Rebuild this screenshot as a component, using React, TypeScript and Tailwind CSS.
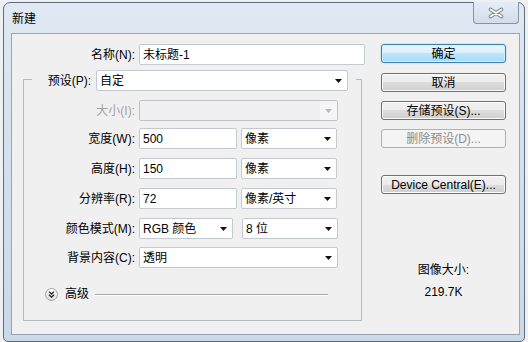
import React from "react";

const FONT = "font-['Liberation_Sans','Noto_Sans_CJK_SC',sans-serif]";

function Arrow({ disabled }: { disabled?: boolean }) {
  return (
    <svg width="7" height="4" viewBox="0 0 7 4">
      <polygon points="0,0 7,0 3.5,4" fill={disabled ? "#b8b8b8" : "#111"} />
    </svg>
  );
}

function Field({ value, className }: { value: string; className: string }) {
  return (
    <div className={`flex h-[21px] items-center rounded-[2px] border border-[#c3c9d0] bg-white pl-[3px] ${className}`}>
      {value}
    </div>
  );
}

function Select({ value, className }: { value: string; className: string }) {
  return (
    <div className={`flex h-[21px] items-center justify-between rounded-[2px] border border-[#c3c9d0] bg-white pl-[3px] pr-[5px] ${className}`}>
      <span>{value}</span>
      <Arrow />
    </div>
  );
}

function Button({ children, kind }: { children: React.ReactNode; kind?: "default" | "disabled" }) {
  if (kind === "default") {
    return (
      <div className="flex h-[19px] w-[125px] items-center justify-center rounded-[3px] border border-[#3c7fb1] bg-[linear-gradient(180deg,#eaf6fd_0%,#d7effc_50%,#bce5fc_50%,#a6d9f4_100%)] shadow-[0_0_2px_#8fd2f5,inset_0_0_0_1px_#d8f0fc]">
        {children}
      </div>
    );
  }
  if (kind === "disabled") {
    return (
      <div className="flex h-[19px] w-[125px] items-center justify-center rounded-[3px] border border-[#adb2b5] bg-[#f4f4f4] text-[#8d8d8d]">
        {children}
      </div>
    );
  }
  return (
    <div className="flex h-[19px] w-[125px] items-center justify-center rounded-[3px] border border-[#707070] bg-[linear-gradient(180deg,#f2f2f2_0%,#ebebeb_50%,#dddddd_50%,#cfcfcf_100%)] shadow-[inset_0_0_0_1px_#fbfbfb]">
      {children}
    </div>
  );
}

function Row({ label, children, className }: { label: string; children: React.ReactNode; className: string }) {
  return (
    <div className={`flex items-center ${className}`}>
      <span className="w-[111px] text-right">{label}</span>
      <div className="ml-[4px] flex gap-[4px]">{children}</div>
    </div>
  );
}

export default function App() {
  return (
    <div className={`flex h-[342px] w-[528px] bg-[#eef1f4] px-[3px] pt-[2px] text-[12px] leading-[14px] text-black ${FONT}`}>
      <div className="flex flex-1 flex-col rounded-t-[7px] rounded-b-[5px] border border-[#5f6c7b] bg-[linear-gradient(180deg,#e0e9f3_0%,#d4e0ed_45%,#cbd8e7_100%)]">
        {/* Title bar */}
        <div className="flex h-[30px] items-start justify-between">
          <span className="ml-[8px] mt-[9px]">新建</span>
          <div className="mr-[5px] mt-[-1px] flex h-[22px] w-[46px] items-center justify-center rounded-b-[4px] border border-t-0 border-[#8793a2] bg-[linear-gradient(180deg,#e4ecf5,#d3deea)]">
            <svg width="16" height="12" viewBox="0 0 16 12">
              <path d="M2.5 2.5 L13.5 9.5 M2.5 9.5 L13.5 2.5" stroke="#6f7b8a" strokeWidth="3.6" strokeLinecap="round" />
              <path d="M2.5 2.5 L13.5 9.5 M2.5 9.5 L13.5 2.5" stroke="#ffffff" strokeWidth="1.8" strokeLinecap="round" />
            </svg>
          </div>
        </div>

        {/* Client area */}
        <div className="mb-[6px] ml-[7px] mr-[4px] flex flex-1 border border-[#97a5b5] bg-[#f0f0f0]">
          {/* Left side */}
          <div className="flex w-[369px] flex-col">
            <div className="mt-[10px] flex items-center">
              <span className="w-[123px] text-right">名称(N):</span>
              <Field value="未标题-1" className="ml-[4px] w-[226px]" />
            </div>

            <div className="ml-[11px] mt-[14px] flex w-[339px] flex-col border border-[#b4bcc3] pb-[19px]">
              <div className="-mt-[10px] ml-[8px] flex w-[324px] items-center bg-[#f0f0f0]">
                <span className="w-[59px] text-right">预设(P):</span>
                <Select value="自定" className="ml-[5px] w-[252px]" />
              </div>

              <Row label="大小(I):" className="mt-[9px] text-[#a3a3a3]">
                <div className="flex h-[21px] w-[199px] items-center justify-end rounded-[2px] border border-[#c0c4c8] bg-[#f0f0f0]">
                  <div className="flex h-full w-[17px] items-center justify-center bg-[#f5f5f5]">
                    <Arrow disabled />
                  </div>
                </div>
              </Row>
              <Row label="宽度(W):" className="mt-[7px]">
                <Field value="500" className="w-[98px]" />
                <Select value="像素" className="w-[96px]" />
              </Row>
              <Row label="高度(H):" className="mt-[9px]">
                <Field value="150" className="w-[98px]" />
                <Select value="像素" className="w-[96px]" />
              </Row>
              <Row label="分辨率(R):" className="mt-[9px]">
                <Field value="72" className="w-[98px]" />
                <Select value="像素/英寸" className="w-[96px]" />
              </Row>
              <Row label="颜色模式(M):" className="mt-[9px]">
                <Select value="RGB 颜色" className="w-[94px]" />
                <Select value="8 位" className="ml-[5px] w-[96px]" />
              </Row>
              <Row label="背景内容(C):" className="mt-[8px]">
                <Select value="透明" className="w-[199px]" />
              </Row>

              <div className="ml-[21px] mr-[33px] mt-[19px] flex items-center">
                <svg width="13" height="13" viewBox="0 0 13 13">
                  <defs>
                    <linearGradient id="adv" x1="0" y1="0" x2="0" y2="1">
                      <stop offset="0" stopColor="#ffffff" />
                      <stop offset="1" stopColor="#d9d9d9" />
                    </linearGradient>
                  </defs>
                  <circle cx="6.5" cy="6.5" r="6" fill="url(#adv)" stroke="#a2a2a2" />
                  <path d="M4 3.6 L6.5 6 L9 3.6 M4 6.8 L6.5 9.2 L9 6.8" fill="none" stroke="#222" strokeWidth="1.3" />
                </svg>
                <span className="ml-[7px]">高级</span>
                <div className="ml-[6px] h-px flex-1 bg-[#a9a9a9] shadow-[0_1px_0_#ffffff]" />
              </div>
            </div>
          </div>

          {/* Right side */}
          <div className="flex w-[125px] flex-col items-center">
            <div className="mt-[10px]">
              <Button kind="default">确定</Button>
            </div>
            <div className="mt-[10px]">
              <Button>取消</Button>
            </div>
            <div className="mt-[9px]">
              <Button>存储预设(S)...</Button>
            </div>
            <div className="mt-[9px]">
              <Button kind="disabled">删除预设(D)...</Button>
            </div>
            <div className="mt-[27px]">
              <Button>Device Central(E)...</Button>
            </div>
            <span className="mt-[69px]">图像大小:</span>
            <span className="mt-[8px]">219.7K</span>
          </div>
        </div>
      </div>
    </div>
  );
}
